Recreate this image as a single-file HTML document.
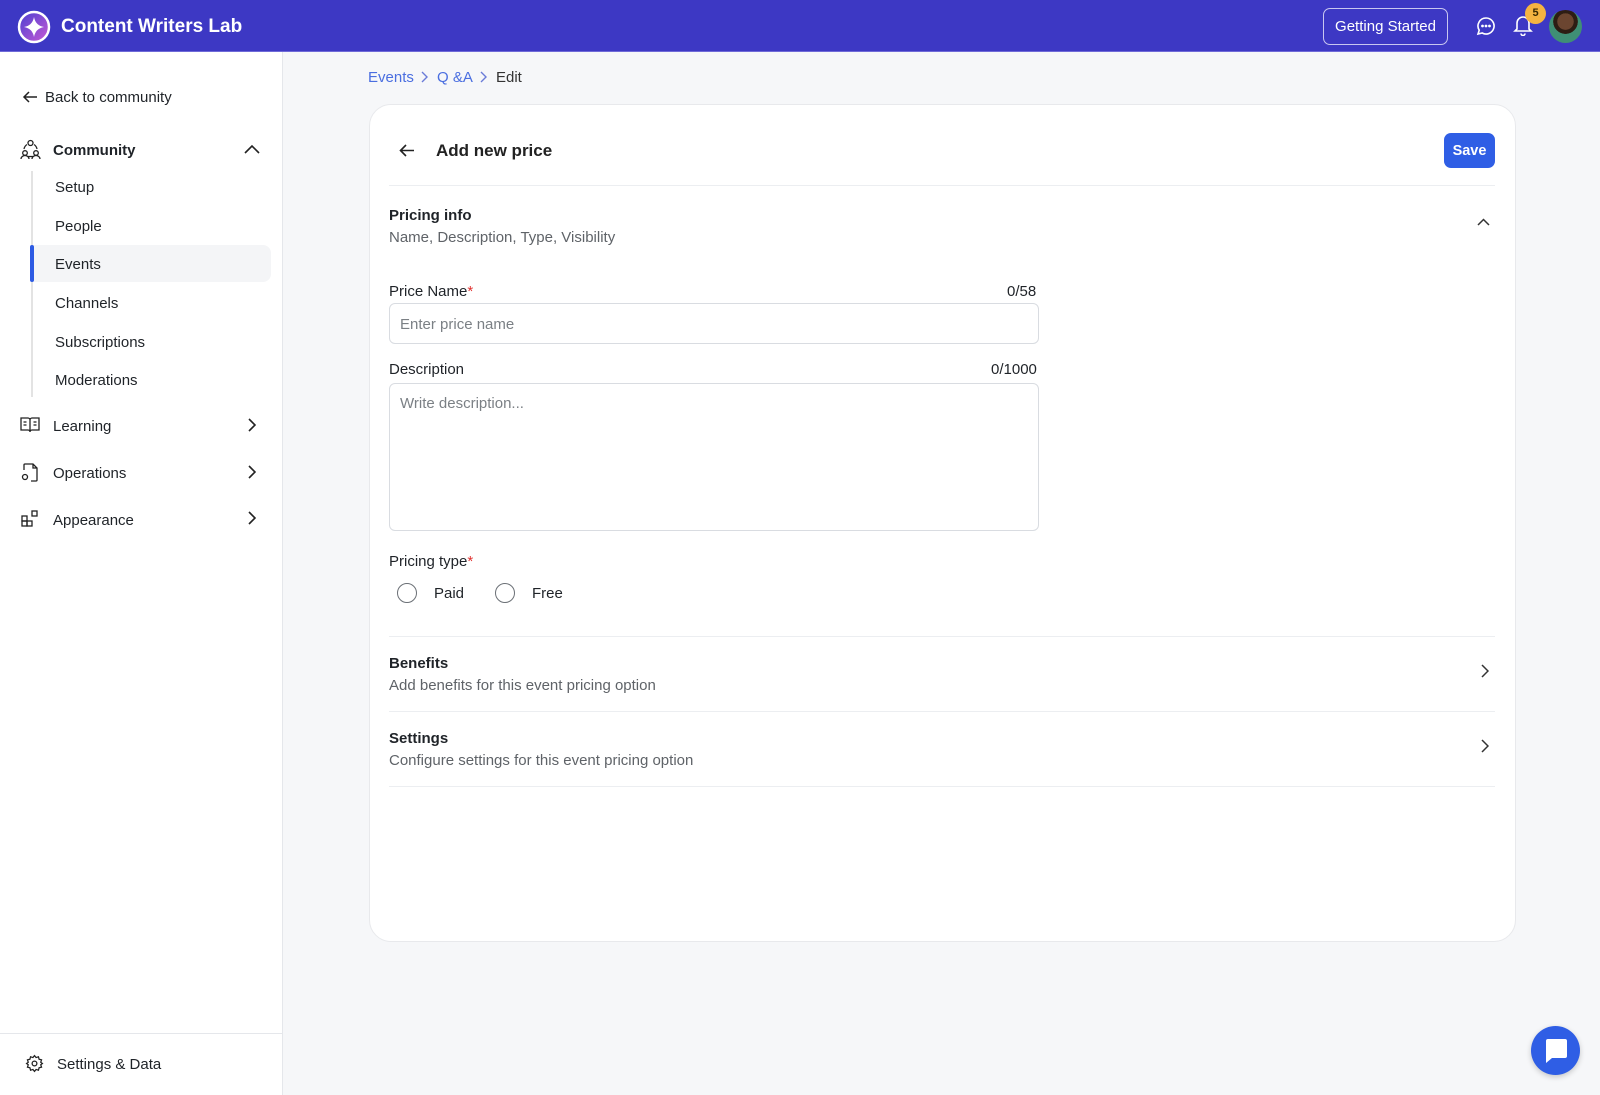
<!DOCTYPE html>
<html><head><meta charset="utf-8"><style>
*{box-sizing:border-box;margin:0;padding:0}
body{width:1600px;height:1095px;overflow:hidden;background:#f6f7f9;font-family:"Liberation Sans",sans-serif;color:#1f2328;position:relative}
.abs{position:absolute}
.hdr{left:0;top:0;width:1600px;height:52px;background:#3d38c4;border-bottom:1px solid #6f6ad8}
.side{left:0;top:52px;width:283px;height:1043px;background:#fff;border-right:1px solid #e5e7eb}
.t{position:absolute;white-space:nowrap;font-size:15px}
.card{left:369px;top:104px;width:1147px;height:838px;background:#fff;border:1px solid #e8e9ec;border-radius:22px}
.hr{position:absolute;height:1px;background:#eceef1}
.gray{color:#5f6368}
.inp{position:absolute;border:1px solid #d9dce1;border-radius:6px;background:#fff}
.radio{position:absolute;width:20px;height:20px;border:1.5px solid #6b7076;border-radius:50%}
</style></head><body>
<div class="abs hdr">
  <svg class="abs" style="left:17px;top:10px" width="34" height="34" viewBox="0 0 34 34"><defs><linearGradient id="g" x1="0" y1="0" x2="1" y2="1"><stop offset="0" stop-color="#4a3fd0"/><stop offset="1" stop-color="#c85ad6"/></linearGradient></defs><circle cx="17" cy="17" r="15" fill="url(#g)" stroke="#fff" stroke-width="2.5"/><path d="M17 7 Q18.5 15.5 27 17 Q18.5 18.5 17 27 Q15.5 18.5 7 17 Q15.5 15.5 17 7Z" fill="#fff"/></svg>
  <div class="t" style="left:61px;top:16px;color:#fff;font-size:19px;font-weight:bold">Content Writers Lab</div>
  <div class="abs" style="left:1323px;top:8px;width:125px;height:37px;border:1.5px solid #c9c7f0;border-radius:7px;color:#fff;font-size:15px;text-align:center;line-height:35px">Getting Started</div>
  <svg class="abs" style="left:1476px;top:16px" width="20" height="20" viewBox="0 0 20 20" fill="none" stroke="#fff" stroke-width="1.6"><path d="M10 2a8 8 0 1 1-3.8 15L2 18l1.2-3.8A8 8 0 0 1 10 2z"/><circle cx="6.5" cy="10" r=".6" fill="#fff"/><circle cx="10" cy="10" r=".6" fill="#fff"/><circle cx="13.5" cy="10" r=".6" fill="#fff"/></svg>
  <svg class="abs" style="left:1513px;top:14px" width="20" height="22" viewBox="0 0 20 22" fill="none" stroke="#fff" stroke-width="1.6"><path d="M4 15V9a6 6 0 0 1 12 0v6l2 2H2z"/><path d="M8 19.5a2 2 0 0 0 4 0"/></svg>
  <div class="abs" style="left:1525px;top:3px;width:21px;height:21px;border-radius:50%;background:#f5b441;color:#3a2a00;font-size:11px;text-align:center;line-height:21px;font-weight:bold">5</div>
  <div class="abs" style="left:1549px;top:10px;width:33px;height:33px;border-radius:50%;background:radial-gradient(circle at 50% 35%,#6b4530 0 30%,#2d1d14 31% 45%,#3f8f75 46%)"></div>
</div>
<div class="abs side">
  <svg class="abs" style="left:22px;top:37px" width="16" height="16" viewBox="0 0 16 16" fill="none" stroke="#222" stroke-width="1.5"><path d="M15 8H2M7 3L2 8l5 5"/></svg>
  <div class="t" style="left:45px;top:37px">Back to community</div>
  <svg class="abs" style="left:20px;top:87px" width="21" height="21" viewBox="0 0 21 21" fill="none" stroke="#222" stroke-width="1.3"><circle cx="10.5" cy="4" r="2.5"/><circle cx="5" cy="14" r="2.3"/><circle cx="16" cy="14" r="2.3"/><path d="M1 20c0-2 2-3.5 4-3.5s4 1.5 4 3.5M12 20c0-2 2-3.5 4-3.5s4 1.5 4 3.5M4 10a7 7 0 0 1 3-4.5M17 10a7 7 0 0 0-3-4.5M8 17.5h5"/></svg>
  <div class="t" style="left:53px;top:90px;font-weight:bold">Community</div>
  <svg class="abs" style="left:244px;top:92px" width="16" height="10" viewBox="0 0 16 10" fill="none" stroke="#222" stroke-width="1.6"><path d="M1 9l7-7 7 7"/></svg>
  <div class="abs" style="left:31px;top:119px;width:2px;height:226px;background:#e3e3e3"></div>
  <div class="abs" style="left:31px;top:193px;width:240px;height:37px;background:#f4f5f7;border-radius:0 8px 8px 0"></div>
  <div class="abs" style="left:30px;top:193px;width:4px;height:37px;background:#2d5be3;border-radius:2px"></div>
  <div class="t" style="left:55px;top:127px">Setup</div>
  <div class="t" style="left:55px;top:166px">People</div>
  <div class="t" style="left:55px;top:204px">Events</div>
  <div class="t" style="left:55px;top:243px">Channels</div>
  <div class="t" style="left:55px;top:282px">Subscriptions</div>
  <div class="t" style="left:55px;top:320px">Moderations</div>
  <svg class="abs" style="left:20px;top:364px" width="20" height="18" viewBox="0 0 20 18" fill="none" stroke="#222" stroke-width="1.3"><path d="M1 2h7a2 2 0 0 1 2 2v12a2 2 0 0 0-2-2H1zM19 2h-7a2 2 0 0 0-2 2v12a2 2 0 0 1 2-2h7zM3.5 6h3M3.5 9h3M13.5 6h3M13.5 9h3"/></svg>
  <div class="t" style="left:53px;top:366px">Learning</div>
  <svg class="abs" style="left:20px;top:410px" width="20" height="20" viewBox="0 0 20 20" fill="none" stroke="#222" stroke-width="1.3"><path d="M4 8V3a1 1 0 0 1 1-1h8l4 4v12a1 1 0 0 1-1 1h-5M13 2v4h4"/><circle cx="5" cy="15" r="2.5"/></svg>
  <div class="t" style="left:53px;top:413px">Operations</div>
  <svg class="abs" style="left:21px;top:458px" width="18" height="18" viewBox="0 0 18 18" fill="none" stroke="#222" stroke-width="1.3"><rect x="1" y="6" width="5" height="5"/><rect x="6" y="11" width="5" height="5"/><rect x="1" y="11" width="5" height="5"/><rect x="11" y="1" width="5" height="5"/></svg>
  <div class="t" style="left:53px;top:460px">Appearance</div>
  <svg class="abs" style="left:248px;top:366px" width="8" height="14" viewBox="0 0 8 14" fill="none" stroke="#222" stroke-width="1.6"><path d="M1 1l6 6-6 6"/></svg>
  <svg class="abs" style="left:248px;top:413px" width="8" height="14" viewBox="0 0 8 14" fill="none" stroke="#222" stroke-width="1.6"><path d="M1 1l6 6-6 6"/></svg>
  <svg class="abs" style="left:248px;top:459px" width="8" height="14" viewBox="0 0 8 14" fill="none" stroke="#222" stroke-width="1.6"><path d="M1 1l6 6-6 6"/></svg>
  <div class="abs" style="left:0;top:981px;width:283px;height:1px;background:#e5e7eb"></div>
  <svg class="abs" style="left:25px;top:1002px" width="19" height="19" viewBox="0 0 24 24" fill="none" stroke="#222" stroke-width="1.6"><circle cx="12" cy="12" r="3"/><path d="M12 2l2 2.5 3-1 .8 3.1 3.1.8-1 3L22 12l-2.1 1.6 1 3-3.1.8-.8 3.1-3-1L12 22l-2-2.5-3 1-.8-3.1-3.1-.8 1-3L2 12l2.1-1.6-1-3 3.1-.8.8-3.1 3 1z"/></svg>
  <div class="t" style="left:57px;top:1004px">Settings &amp; Data</div>
</div>
<div class="t" style="left:368px;top:69px;color:#4a6ee0">Events</div>
<svg class="abs" style="left:421px;top:71px" width="8" height="12" viewBox="0 0 8 12" fill="none" stroke="#6a7bd8" stroke-width="1.4"><path d="M1 1l5 5-5 5"/></svg>
<div class="t" style="left:437px;top:69px;color:#4a6ee0">Q &amp;A</div>
<svg class="abs" style="left:480px;top:71px" width="8" height="12" viewBox="0 0 8 12" fill="none" stroke="#6a7bd8" stroke-width="1.4"><path d="M1 1l5 5-5 5"/></svg>
<div class="t" style="left:496px;top:69px;color:#333">Edit</div>
<div class="abs card"></div>
<svg class="abs" style="left:399px;top:143px" width="16" height="15" viewBox="0 0 16 15" fill="none" stroke="#222" stroke-width="1.6"><path d="M15 7.5H2M7 2L1.5 7.5 7 13"/></svg>
<div class="t" style="left:436px;top:141px;font-size:17px;font-weight:bold;color:#222">Add new price</div>
<div class="abs" style="left:1444px;top:133px;width:51px;height:35px;border-radius:7px;background:#2f5ee5;color:#fff;font-weight:bold;font-size:14.5px;text-align:center;line-height:36px">Save</div>
<div class="hr" style="left:389px;top:185px;width:1106px"></div>
<div class="t" style="left:389px;top:207px;font-weight:bold">Pricing info</div>
<div class="t gray" style="left:389px;top:229px">Name, Description, Type, Visibility</div>
<svg class="abs" style="left:1477px;top:218px" width="13" height="8" viewBox="0 0 13 8" fill="none" stroke="#333" stroke-width="1.5"><path d="M1 7l5.5-5.5L12 7"/></svg>
<div class="t" style="left:389px;top:283px">Price Name<span style="color:#e0312f">*</span></div>
<div class="t" style="left:1007px;top:283px">0/58</div>
<div class="inp" style="left:389px;top:303px;width:650px;height:41px"></div>
<div class="t" style="left:400px;top:316px;color:#7b8085">Enter price name</div>
<div class="t" style="left:389px;top:361px">Description</div>
<div class="t" style="left:991px;top:361px">0/1000</div>
<div class="inp" style="left:389px;top:383px;width:650px;height:148px"></div>
<div class="t" style="left:400px;top:395px;color:#7b8085">Write description...</div>
<div class="t" style="left:389px;top:553px">Pricing type<span style="color:#e0312f">*</span></div>
<div class="radio" style="left:397px;top:583px"></div>
<div class="t" style="left:434px;top:585px">Paid</div>
<div class="radio" style="left:495px;top:583px"></div>
<div class="t" style="left:532px;top:585px">Free</div>
<div class="hr" style="left:389px;top:636px;width:1106px"></div>
<div class="t" style="left:389px;top:655px;font-weight:bold">Benefits</div>
<div class="t gray" style="left:389px;top:677px">Add benefits for this event pricing option</div>
<svg class="abs" style="left:1481px;top:664px" width="8" height="14" viewBox="0 0 8 14" fill="none" stroke="#333" stroke-width="1.5"><path d="M1 1l6 6-6 6"/></svg>
<div class="hr" style="left:389px;top:711px;width:1106px"></div>
<div class="t" style="left:389px;top:730px;font-weight:bold">Settings</div>
<div class="t gray" style="left:389px;top:752px">Configure settings for this event pricing option</div>
<svg class="abs" style="left:1481px;top:739px" width="8" height="14" viewBox="0 0 8 14" fill="none" stroke="#333" stroke-width="1.5"><path d="M1 1l6 6-6 6"/></svg>
<div class="hr" style="left:389px;top:786px;width:1106px"></div>
<div class="abs" style="left:1531px;top:1026px;width:49px;height:49px;border-radius:50%;background:#2f5ee5;box-shadow:0 2px 6px rgba(0,0,0,.2)"></div>
<svg class="abs" style="left:1543px;top:1038px" width="25" height="26" viewBox="0 0 25 26"><path d="M3 1h19a2 2 0 0 1 2 2v15a2 2 0 0 1-2 2H9l-6 5V3a2 2 0 0 1 2-2z" fill="#fff"/></svg>
</body></html>
